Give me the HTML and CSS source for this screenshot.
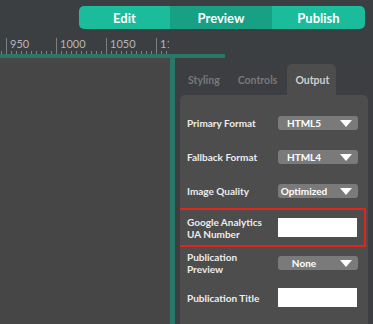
FILE: index.html
```html
<!DOCTYPE html>
<html lang="en">
<head>
    <meta charset="UTF-8">
    <meta name="viewport" content="width=device-width, initial-scale=1.0">
    <title>Publish Settings</title>
    <link rel="stylesheet" href="styles.css">
</head>
<body>
    <div class="app">
        <!-- Mode switcher -->
        <header class="topbar">
            <nav class="modes">
                <a class="mode mode-edit" href="#">Edit</a>
                <a class="mode mode-preview active" href="#">Preview</a>
                <a class="mode mode-publish" href="#">Publish</a>
            </nav>
        </header>

        <!-- Ruler -->
        <div class="ruler">
            <span class="ruler-mark">950</span>
            <span class="ruler-mark">1000</span>
            <span class="ruler-mark">1050</span>
            <span class="ruler-mark">1100</span>
        </div>
        <div class="guide"></div>

        <div class="workspace">
            <div class="stage"></div>
            <div class="divider"></div>

            <!-- Properties sidebar -->
            <aside class="sidebar">
                <div class="tabs">
                    <div class="tab">Styling</div>
                    <div class="tab">Controls</div>
                    <div class="tab active">Output</div>
                </div>

                <div class="panel">
                    <div class="row">
                        <label class="row-label">Primary Format</label>
                        <div class="select"><span>HTML5</span><i class="caret"></i></div>
                    </div>
                    <div class="row">
                        <label class="row-label">Fallback Format</label>
                        <div class="select"><span>HTML4</span><i class="caret"></i></div>
                    </div>
                    <div class="row">
                        <label class="row-label">Image Quality</label>
                        <div class="select"><span>Optimized</span><i class="caret"></i></div>
                    </div>
                    <div class="row row-tall highlight">
                        <label class="row-label">Google Analytics UA Number</label>
                        <input class="text-input" type="text">
                    </div>
                    <div class="row row-short">
                        <label class="row-label">Publication Preview</label>
                        <div class="select"><span>None</span><i class="caret"></i></div>
                    </div>
                    <div class="row row-tall">
                        <label class="row-label">Publication Title</label>
                        <input class="text-input" type="text">
                    </div>
                    <div class="row row-last">
                        <label class="row-label">Allow download</label>
                    </div>
                </div>
            </aside>
        </div>
    </div>
</body>
</html>
```

FILE: styles.css
```css
/* General */
html, body {
    margin: 0;
    height: 100%;
    overflow: hidden;
}

body {
    background: #3c3f42;
    font-family: Lato, "Open Sans", sans-serif;
    color: #e8e8e8;
}

.app {
    display: flex;
    flex-direction: column;
    height: 100%;
}

/* Top bar with mode buttons */
.topbar {
    height: 36px;
    display: flex;
    justify-content: flex-end;
    align-items: flex-start;
    padding-right: 8px;
    flex-shrink: 0;
}

.modes {
    display: flex;
    margin-top: 6px;
    height: 23px;
    border-radius: 5px;
    overflow: hidden;
    background: #1abc9c;
}

.mode {
    display: flex;
    align-items: center;
    justify-content: center;
    color: #fff;
    font-weight: bold;
    font-size: 13px;
    text-decoration: none;
}

.mode-edit { width: 91px; }
.mode-preview { width: 102px; }
.mode-publish { width: 93px; }

.mode.active {
    background: #17a083;
}

/* Ruler */
.ruler {
    width: 169px;
    height: 18px;
    display: flex;
    align-items: flex-end;
    padding-left: 6px;
    box-sizing: border-box;
    overflow: hidden;
    flex-shrink: 0;
    background: repeating-linear-gradient(to right, #7d7f82 0 1px, transparent 1px 5px) 1px 100% / 100% 3px no-repeat;
}

.ruler-mark {
    flex-shrink: 0;
    width: 50px;
    height: 16px;
    box-sizing: border-box;
    border-left: 1px solid #7d7f82;
    padding-left: 3px;
    font-size: 11px;
    line-height: 12px;
    color: #b4b6b8;
}

.guide {
    width: 225px;
    height: 4px;
    background: #2a7767;
    flex-shrink: 0;
}

/* Workspace */
.workspace {
    flex: 1;
    display: flex;
    min-height: 0;
}

.stage {
    width: 170px;
    background: #464646;
}

.divider {
    width: 5px;
    background: #2a7767;
}

.sidebar {
    flex: 1;
    padding: 6px 5px 0 5px;
    display: flex;
    flex-direction: column;
    min-height: 0;
    background: #3c3e41;
}

/* Tabs */
.tabs {
    display: flex;
    gap: 2px;
    height: 31px;
    flex-shrink: 0;
}

.tab {
    display: flex;
    align-items: center;
    padding: 0 8px;
    font-size: 10.5px;
    font-weight: bold;
    color: #77797b;
    border-radius: 5px 5px 0 0;
}

.tab.active {
    background: #4d4d4d;
    color: #cfcfcf;
    padding-right: 7px;
}

/* Panel */
.panel {
    flex: 1;
    min-height: 0;
    overflow: hidden;
    background: #4d4d4d;
    border-radius: 5px 5px 0 0;
    padding: 11px 10px 0 7px;
}

.row {
    display: flex;
    align-items: center;
    height: 34px;
    box-sizing: border-box;
}

.row-tall { height: 39px; }
.row-short { height: 31px; }

.row.highlight {
    border: 2px solid #e0261b;
    margin: 0 -8px 0 -10px;
    padding: 0 6px 0 8px;
}

.row-label {
    width: 84px;
    margin-right: 7px;
    flex-shrink: 0;
    font-size: 10px;
    font-weight: bold;
    line-height: 12px;
    color: #ececec;
}

.row-last {
    align-items: flex-start;
    padding-top: 5px;
}

/* Controls */
.select {
    position: relative;
    width: 80px;
    height: 14px;
    background: #7a7a7a;
    border-radius: 3px;
    display: flex;
    align-items: center;
    box-sizing: border-box;
    padding-right: 28px;
}

.select span {
    flex: 1;
    text-align: center;
    font-size: 10px;
    font-weight: bold;
    color: #fff;
}

.caret {
    position: absolute;
    right: 6px;
    top: 4px;
    width: 0;
    height: 0;
    border-left: 6px solid transparent;
    border-right: 6px solid transparent;
    border-top: 7px solid #fff;
}

.text-input {
    width: 79px;
    height: 19px;
    box-sizing: border-box;
    border: none;
    margin: 0;
    padding: 0;
    background: #fff;
}
```
